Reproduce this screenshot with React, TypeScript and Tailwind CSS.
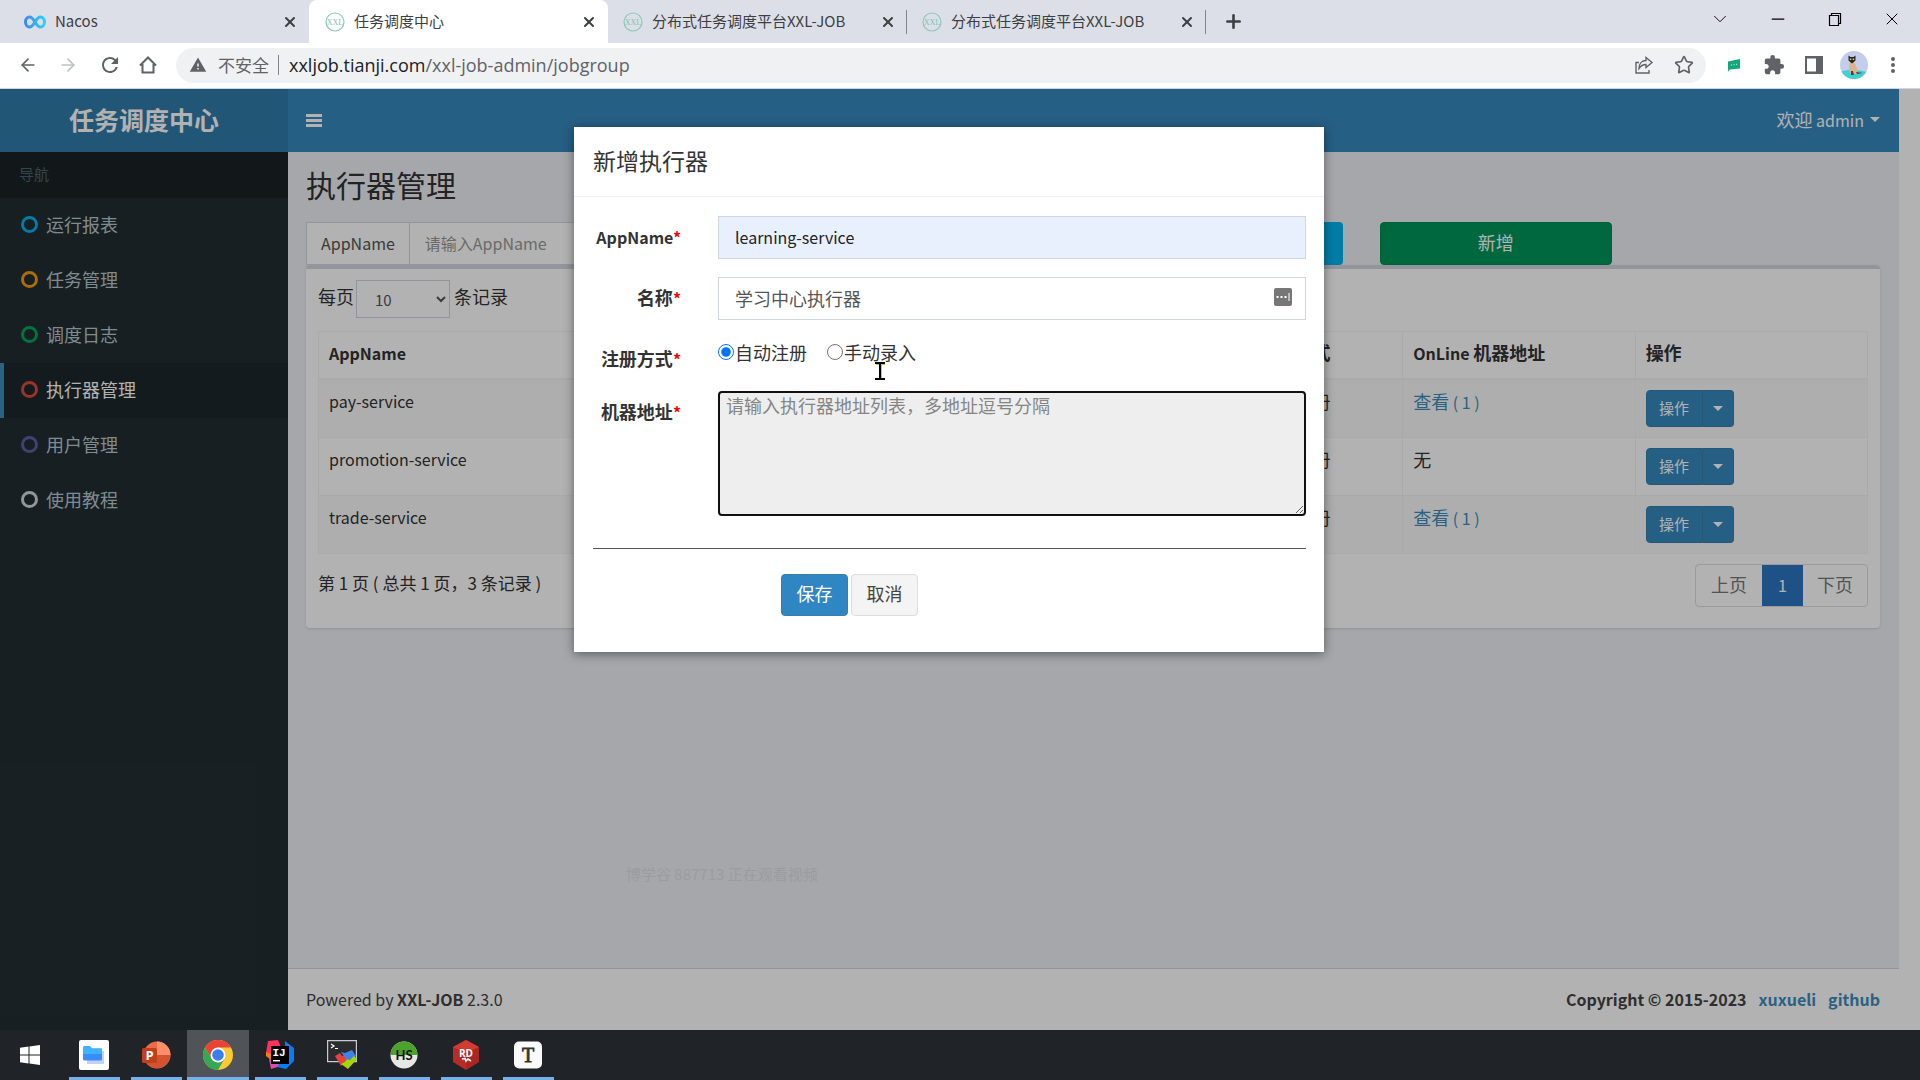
import React from 'react';
import { ArrowLeft, ArrowRight, ChevronDown, Minus, Plus, Star, X } from 'lucide-react';
import { MdExtension, MdRefresh, MdWarning } from 'react-icons/md';

interface Tab {
  title: string;
  icon: 'nacos' | 'xxl';
  className: string;
  divider?: boolean;
}

interface MenuItem {
  label: string;
  ring: string;
  active?: boolean;
}

interface Executor {
  appName: string;
  title: string;
  online: number;
}

const tabs: Tab[] = [
  { title: 'Nacos', icon: 'nacos', className: 'w-[309px] pl-6' },
  { title: '任务调度中心', icon: 'xxl', className: 'w-[299px] pl-4 rounded-t-lg bg-white' },
  { title: '分布式任务调度平台XXL-JOB', icon: 'xxl', className: 'w-[299px] pl-[15px]', divider: true },
  { title: '分布式任务调度平台XXL-JOB', icon: 'xxl', className: 'w-[299px] pl-[15px]', divider: true },
];

const menu: MenuItem[] = [
  { label: '运行报表', ring: 'border-[#00b4f0]' },
  { label: '任务管理', ring: 'border-[#f39c12]' },
  { label: '调度日志', ring: 'border-[#00a65a]' },
  { label: '执行器管理', ring: 'border-[#dd4b39]', active: true },
  { label: '用户管理', ring: 'border-[#605ca8]' },
  { label: '使用教程', ring: 'border-[#d2d6de]' },
];

const executors: Executor[] = [
  { appName: 'pay-service', title: '支付服务', online: 1 },
  { appName: 'promotion-service', title: '促销服务', online: 0 },
  { appName: 'trade-service', title: '交易服务', online: 1 },
];

const XxlIcon = () => (
  <svg viewBox="0 0 20 20" className="h-5 w-5">
    <circle cx="10" cy="10" r="9" fill="none" stroke="#8cc9b8" strokeWidth="1.2" />
    <text x="10" y="12.500" textAnchor="middle" fontSize="8" fill="#7cc4b0" fontFamily="Liberation Serif, serif">XXL</text>
  </svg>
);

const NacosIcon = () => (
  <svg viewBox="0 0 22 14" className="h-[14px] w-[22px]" fill="none" strokeWidth="3">
    <defs>
      <linearGradient id="nacos" x1="0" x2="1">
        <stop offset="0" stopColor="#3b8cf0" />
        <stop offset="1" stopColor="#2ed0f5" />
      </linearGradient>
    </defs>
    <path stroke="url(#nacos)" d="M11 7C9 3.500 7.500 2 5.500 2a4 5 0 0 0 0 10C7.500 12 9 10.500 11 7s3.500-5 5.500-5a4 5 0 0 1 0 10C14.500 12 13 10.500 11 7z" />
  </svg>
);

const Caret = () => (
  <svg viewBox="0 0 10 5" className="h-[5px] w-[10px]" fill="currentColor">
    <path d="M0 0h10L5 5z" />
  </svg>
);

const TabStrip = () => (
  <div className="flex h-[43px] shrink-0 items-stretch bg-[#dcdfe7] text-[15px] text-[#3c4043]">
    {tabs.map((tab, i) => (
      <div key={i} className={`relative flex items-center pr-[11px] ${tab.className}`}>
        {tab.icon === 'nacos' ? <NacosIcon /> : <XxlIcon />}
        <span className="ml-[9px] flex-1 truncate">{tab.title}</span>
        <button aria-label="关闭标签页">
          <X className="h-4 w-4" strokeWidth={3} />
        </button>
        {tab.divider && <span className="absolute top-[10px] right-0 h-6 w-px bg-[#80868b]" />}
      </div>
    ))}
    <button aria-label="新标签页" className="ml-[17px]">
      <Plus className="h-[21px] w-[21px]" strokeWidth={3} />
    </button>
    <div className="ml-auto flex items-center gap-[37px] pr-[18px] pb-[6px] text-black">
      <button aria-label="搜索标签页"><ChevronDown className="h-[22px] w-[22px]" strokeWidth={1} /></button>
      <button aria-label="最小化"><Minus className="h-5 w-5" strokeWidth={1.5} /></button>
      <button aria-label="还原">
        <svg viewBox="0 0 20 20" className="h-5 w-5" fill="none" stroke="currentColor" strokeWidth="1.2">
          <path d="M4.500 6.500h9v10h-9zM6.500 6.500v-2h9v10h-2" />
        </svg>
      </button>
      <button aria-label="关闭"><X className="h-5 w-5" strokeWidth={1.2} /></button>
    </div>
  </div>
);

const Avatar = () => (
  <svg viewBox="0 0 28 28" className="h-7 w-7">
    <defs>
      <clipPath id="avatar"><circle cx="14" cy="14" r="14" /></clipPath>
    </defs>
    <g clipPath="url(#avatar)">
      <path fill="#c3cdec" d="M0 0h28v28H0z" />
      <path fill="#3fcfd4" d="M0 21c8-3 18-2 28 0v7H0z" />
      <path fill="#d9b78c" d="M10 11c-1 4-2 9 1 12h6c1-4-1-9-3-12z" />
      <path fill="#5b3d33" d="M11 20h2l1 4h-3zM16 21l7 1-6 1z" />
      <path fill="#2c2320" d="M8.500 4.500l2 1.500h3l2-1.500v5l-3.500 3-3.500-3z" />
      <path fill="#e8c9a0" d="M9.800 7.500h1.500V9H9.800zM12.700 7.500h1.500V9h-1.500z" />
    </g>
  </svg>
);

const Toolbar = () => (
  <div className="flex h-[46px] shrink-0 items-center border-b border-[#cfd5e4] bg-white pr-6 pb-px pl-[18px] text-[#5f6368]">
    <div className="flex items-center gap-5">
      <button aria-label="后退"><ArrowLeft className="h-5 w-5" /></button>
      <button aria-label="前进"><ArrowRight className="h-5 w-5 text-[#bdc1c6]" /></button>
      <button aria-label="重新加载"><MdRefresh className="h-6 w-6" /></button>
      <button aria-label="主页" className="-ml-1">
        <svg viewBox="0 0 20 20" className="h-5 w-5" fill="none" stroke="currentColor" strokeWidth="2">
          <path d="M2 10.500L10 2.500l8 8M4.500 9v8.500h11V9" />
        </svg>
      </button>
    </div>
    <div className="ml-[18px] flex h-[35px] flex-1 items-center rounded-full bg-[#f0f1f3] pr-3 pl-[13px] text-[17px]">
      <MdWarning className="h-[18px] w-[18px]" />
      <span className="ml-[11px]">不安全</span>
      <span className="mx-[9px] h-5 w-px bg-[#80868b]" />
      <span className="ml-px font-['Open_Sans',sans-serif] text-[18px] whitespace-pre">
        <span className="text-[#202124]">xxljob.tianji.com</span>/xxl-job-admin/jobgroup
      </span>
      <button aria-label="分享" className="ml-auto">
        <svg viewBox="0 0 20 20" className="h-5 w-5" fill="none" stroke="currentColor" strokeWidth="1.4">
          <path d="M5 7.500H2V18h13v-3M12 2.500l6 5-6 5v-3c-3 0-5 1-7 4 0-5 3-8 7-8z" />
        </svg>
      </button>
      <button aria-label="收藏" className="ml-5"><Star className="h-5 w-5" /></button>
    </div>
    <svg viewBox="0 0 14 14" className="ml-[21px] h-[14px] w-[14px]">
      <path fill="#12a77c" d="M1 3.500l12-2.500v9.500L3 11.500 1 13.500z" />
      <path stroke="#d7f5ea" d="M4 7h1M6.500 6.700h1M9 6.300h1" />
    </svg>
    <MdExtension className="ml-[22px] h-[22px] w-[22px]" />
    <svg viewBox="0 0 18 18" className="ml-5 h-[18px] w-[18px]">
      <path fill="currentColor" fillRule="evenodd" d="M0 0h18v18H0zM2 2.500v13h9v-13z" />
    </svg>
    <span className="ml-[17px]"><Avatar /></span>
    <svg viewBox="0 0 6 18" className="ml-[22px] h-[18px] w-[6px]" fill="currentColor">
      <circle cx="3" cy="3" r="2" /><circle cx="3" cy="9" r="2" /><circle cx="3" cy="15" r="2" />
    </svg>
  </div>
);

const Sidebar = () => (
  <aside className="flex w-[288px] shrink-0 flex-col bg-[#222d32]">
    <a href="#home" className="flex h-[63px] items-center justify-center bg-[#317ba9] pb-[2px] text-[25px] font-bold text-white">
      任务调度中心
    </a>
    <div className="flex h-[46px] items-center bg-[#1a2226] px-[19px] pb-[2px] text-[15px] text-[#4b646f]">导航</div>
    <nav>
      {menu.map((item) => (
        <a
          key={item.label}
          href={`#${item.label}`}
          className={`flex h-[55px] items-center border-l-4 pb-[2px] pl-[17px] text-[18px] ${
            item.active ? 'border-[#3c8dbc] bg-[#1e282c] text-white' : 'border-transparent text-[#b8c7ce]'
          }`}
        >
          <span className={`mr-2 h-[17px] w-[17px] rounded-full border-[3px] ${item.ring}`} />
          {item.label}
        </a>
      ))}
    </nav>
  </aside>
);

const SearchRow = () => (
  <div className="grid grid-cols-12 gap-x-[37px]">
    <div className="col-span-3 flex h-[43px] border border-[#d2d6de] bg-white">
      <label htmlFor="q-app" className="flex items-center border-r border-[#d2d6de] px-[14px] pb-[2px] text-[16px] text-[#555]">
        AppName
      </label>
      <input id="q-app" placeholder="请输入AppName" className="min-w-0 flex-1 px-[15px] pb-[2px] text-[16px] placeholder:text-[#999]" />
    </div>
    <div className="col-span-3 flex h-[43px] border border-[#d2d6de] bg-white">
      <label htmlFor="q-title" className="flex items-center border-r border-[#d2d6de] px-[14px] pb-[2px] text-[18px] text-[#555]">
        名称
      </label>
      <input id="q-title" placeholder="请输入名称" className="min-w-0 flex-1 px-[15px] pb-[2px] text-[18px] placeholder:text-[#999]" />
    </div>
    <button className="col-span-2 h-[43px] rounded bg-[#00b4f0] pb-[2px] text-[18px] text-white">搜索</button>
    <button className="col-span-2 h-[43px] rounded border border-[#008d4c] bg-[#00955a] pb-[2px] text-[18px] text-white">新增</button>
  </div>
);

const ExecutorTable = () => (
  <table className="mt-[13px] w-full table-fixed border-collapse text-left text-[#333]">
    <thead>
      <tr className="h-[47px] border-b-2 border-[#f4f4f4] text-[18px]">
        <th className="w-[40%] border border-[#f4f4f4] px-[10px] pb-1 text-[16px]">AppName</th>
        <th className="w-[20%] border border-[#f4f4f4] px-[10px] pb-1">名称</th>
        <th className="w-[10%] border border-[#f4f4f4] px-[10px] pb-1">注册方式</th>
        <th className="w-[15%] border border-[#f4f4f4] px-[10px] pb-1"><span className="text-[16px]">OnLine </span>机器地址</th>
        <th className="w-[15%] border border-[#f4f4f4] px-[10px] pb-1">操作</th>
      </tr>
    </thead>
    <tbody>
      {executors.map((row) => (
        <tr key={row.appName} className="h-[58px] align-top text-[18px] leading-[25px] odd:bg-[#f9f9f9]">
          <td className="border border-[#f4f4f4] px-[10px] pt-[9px] text-[16px]">{row.appName}</td>
          <td className="border border-[#f4f4f4] px-[10px] pt-[9px]">{row.title}</td>
          <td className="border border-[#f4f4f4] px-[10px] pt-[9px]">自动注册</td>
          <td className="border border-[#f4f4f4] px-[10px] pt-[9px]">
            {row.online > 0 ? (
              <a href="#online" className="text-[#3c8dbc]">查看<span className="text-[16px]"> ( {row.online} )</span></a>
            ) : (
              '无'
            )}
          </td>
          <td className="border border-[#f4f4f4] p-[10px]">
            <div className="flex h-[37px] text-[15px] text-white">
              <button className="w-[57px] rounded-l border border-[#367fa9] bg-[#3789bd] pb-[2px]">操作</button>
              <button aria-label="更多操作" className="flex w-[31px] items-center justify-center rounded-r border border-l-0 border-[#367fa9] bg-[#3789bd]">
                <Caret />
              </button>
            </div>
          </td>
        </tr>
      ))}
    </tbody>
  </table>
);

const ContentBox = () => (
  <section className="rounded border-t-4 border-[#d2d6de] bg-white px-3 pt-[11px] pb-[21px] shadow-sm">
    <div className="flex items-start gap-[2px] text-[18px] leading-8 text-[#333]">
      <label htmlFor="page-size">每页</label>
      <select id="page-size" className="mr-[2px] h-[38px] w-[94px] border border-[#d2d6de] bg-white px-[14px] text-[15px] text-[#555]">
        <option>10</option>
        <option>25</option>
      </select>
      <span>条记录</span>
    </div>
    <ExecutorTable />
    <div className="mt-[10px] flex items-start justify-between">
      <p className="pt-[6px] text-[17px] leading-[25px] text-[#333]">第 1 页 ( 总共 1 页，3 条记录 )</p>
      <div className="flex h-[43px] overflow-hidden rounded border border-[#ddd] text-[18px] text-[#777]">
        <button className="w-[66px] pb-[2px]">上页</button>
        <button className="-my-px w-[41px] bg-[#2c74c0] text-[16px] text-white">1</button>
        <button className="w-[64px] pb-[2px]">下页</button>
      </div>
    </div>
  </section>
);

const FormRow = ({ label, id, children }: { label: string; id: string; children: React.ReactNode }) => (
  <div className="flex items-start">
    <label htmlFor={id} className="w-[88px] shrink-0 pt-2 text-right text-[18px] leading-[25px] font-bold text-[#333]">
      {label === 'AppName' ? <span className="text-[16px]">{label}</span> : label}
      <span className="text-[16px] text-[#f00]">*</span>
    </label>
    <div className="ml-[37px] min-w-0 flex-1">{children}</div>
  </div>
);

const AddDialog = () => (
  <div role="dialog" aria-labelledby="dialog-title" className="absolute top-[38px] left-[574px] w-[750px] bg-white text-[#333] shadow-[0_2px_10px_rgba(0,0,0,0.45)]">
    <h4 id="dialog-title" className="flex h-[70px] items-center border-b border-[#f0f0f0] px-[19px] pb-[2px] text-[23px]">新增执行器</h4>
    <form className="pt-[19px] pr-[18px] pb-[36px] pl-[19px]">
      <div className="flex flex-col gap-[18px]">
        <FormRow label="AppName" id="appname">
          <input id="appname" defaultValue="learning-service" className="block h-[43px] w-full border border-[#d2d6de] bg-[#e8f0fe] px-4 pb-[2px] text-[16px] text-[#222]" />
        </FormRow>
        <FormRow label="名称" id="title">
          <div className="flex h-[43px] items-center border border-[#d2d6de] pr-[13px]">
            <input id="title" defaultValue="学习中心执行器" className="h-full min-w-0 flex-1 px-4 pb-[2px] text-[18px] text-[#555]" />
            <svg viewBox="0 0 18 18" className="mb-1 h-[18px] w-[18px]">
              <rect width="18" height="18" rx="2" fill="#777" />
              <path stroke="#fff" strokeWidth="2" d="M2.500 9h2M6.500 9h2M10.500 9h2" />
              <path stroke="#fff" d="M15 5v8" />
            </svg>
          </div>
        </FormRow>
        <FormRow label="注册方式" id="auto">
          <div className="flex h-[35px] items-center gap-5 pb-[7px] text-[18px]">
            <label className="flex items-center gap-px">
              <input id="auto" type="radio" name="addressType" defaultChecked className="h-4 w-4" />自动注册
            </label>
            <label className="flex items-center gap-px">
              <input type="radio" name="addressType" className="h-4 w-4" />手动录入
            </label>
          </div>
        </FormRow>
        <FormRow label="机器地址" id="addresses">
          <textarea
            id="addresses"
            readOnly
            placeholder="请输入执行器地址列表，多地址逗号分隔"
            className="block h-[125px] w-full rounded border-2 border-[#101010] bg-[#eee] px-[6px] text-[18px] leading-[25px] placeholder:text-[#858585]"
          />
        </FormRow>
      </div>
      <hr className="mt-8 border-[#555]" />
      <div className="mt-[25px] flex gap-[3px] pl-[188px] text-[18px]">
        <button type="button" className="h-[42px] w-[67px] rounded border border-[#367fa9] bg-[#3085c3] pb-[3px] text-white">保存</button>
        <button type="button" className="h-[42px] w-[67px] rounded border border-[#ddd] bg-[#f4f4f4] pb-[3px] text-[#444]">取消</button>
      </div>
    </form>
  </div>
);

const apps = [
  {
    name: '文件',
    icon: (
      <svg viewBox="0 0 30 30" className="h-[30px] w-[30px]">
        <rect width="30" height="30" rx="2" fill="#fff" />
        <path fill="#b4c4fb" d="M8 11h17v13H8z" opacity=".8" />
        <path fill="#3a8df8" d="M4 8q0-1.500 1.500-1.500H11l2 2h8.500Q23 8.500 23 10v9q0 1.500-1.500 1.500h-16Q4 20.500 4 19z" />
        <path fill="#3fb2fa" d="M4 7.500Q4 6 5.500 6H11l2 2.500h10V14H4z" />
      </svg>
    ),
  },
  {
    name: 'PowerPoint',
    icon: (
      <svg viewBox="0 0 30 30" className="h-[30px] w-[30px]">
        <circle cx="16" cy="15" r="13.500" fill="#ed6c47" />
        <path fill="#ff8f6b" d="M16 1.500A13.500 13.500 0 0 1 29.500 15H16z" />
        <path fill="#d35230" d="M3 15h26.500A13.500 13.500 0 0 1 5 22.500z" />
        <rect x="1" y="8" width="15" height="15" rx="1.500" fill="#c43e1c" />
        <text x="8.500" y="20" textAnchor="middle" fontSize="13" fontWeight="bold" fill="#fff" fontFamily="Open Sans, sans-serif">P</text>
      </svg>
    ),
  },
  {
    name: 'Chrome',
    active: true,
    icon: (
      <svg viewBox="0 0 30 30" className="h-[30px] w-[30px]">
        <circle cx="15" cy="15" r="15" fill="#fcc934" />
        <path fill="#ea4335" d="M2 7.500A15 15 0 0 1 28 7.500H15L8.500 18.750z" />
        <path fill="#34a853" d="M2 7.500A15 15 0 0 0 15 30l6.500-11.250L15 22.500 8.500 18.750z" />
        <circle cx="15" cy="15" r="7.500" fill="#fff" />
        <circle cx="15" cy="15" r="5.800" fill="#3b7ded" />
      </svg>
    ),
  },
  {
    name: 'IntelliJ IDEA',
    icon: (
      <svg viewBox="0 0 30 30" className="h-[30px] w-[30px]">
        <path fill="#fe315d" d="M3 1l10-1 3 7-9 14-6-8z" />
        <path fill="#f97a12" d="M1 12l6 2-1 6-5-4z" />
        <path fill="#d94fa8" d="M4 19l6 2 6 5-10 3z" />
        <path fill="#087cfa" d="M20 1l9 7v13l-8 8-9-2 8-10z" />
        <path fill="#000" d="M6 6h18v18H6z" />
        <text x="7.500" y="16" fontSize="11" fontWeight="bold" fill="#fff" fontFamily="Liberation Mono, monospace">IJ</text>
        <path fill="#fff" d="M8 20h7v1.400H8z" />
      </svg>
    ),
  },
  {
    name: 'MobaXterm',
    icon: (
      <svg viewBox="0 0 30 30" className="h-[30px] w-[30px]">
        <path fill="#2a2c30" stroke="#c8cacd" strokeWidth="1.200" d="M.6.600h28.800v21H.6z" />
        <path fill="none" stroke="#fff" strokeWidth="1.200" d="M4 4l3 2-3 2M8 8.500h3" />
        <path fill="#e8413c" d="M8 16l5-3 2 3 3-1 2 5-6 6z" />
        <path fill="#3f83ea" d="M14 12l4 1 7-3 4 6-5 4-5-1z" />
        <path fill="#a6d608" d="M14 24l4-2 2-3 3 1 4-4 3 3-9 10z" />
      </svg>
    ),
  },
  {
    name: 'HeidiSQL',
    icon: (
      <svg viewBox="0 0 30 30" className="h-[30px] w-[30px]">
        <circle cx="15" cy="15" r="13.500" fill="#e6e8e6" />
        <path fill="#4ba32a" d="M1.500 15a13.500 13.500 0 0 1 27 0z" />
        <text x="15" y="19.500" textAnchor="middle" fontSize="13" fontWeight="bold" fill="#111" fontFamily="Lato, sans-serif">HS</text>
      </svg>
    ),
  },
  {
    name: 'Redis Desktop',
    icon: (
      <svg viewBox="0 0 30 30" className="h-[30px] w-[30px]">
        <path fill="#b92b27" d="M15 0l13 7v15l-13 8-13-8V7z" />
        <path fill="#d23a33" d="M15 0l13 7-13 6L2 7z" />
        <path fill="#9c211f" d="M15 13l13-6v15l-13 8z" opacity=".5" />
        <text x="15" y="17" textAnchor="middle" fontSize="10" fontWeight="bold" fill="#fff" fontFamily="Open Sans, sans-serif">RD</text>
        <path fill="none" stroke="#fff" strokeWidth="1.600" d="M11 19l3-.5 1 2.500 2-2 3 2" />
      </svg>
    ),
  },
  {
    name: 'Typora',
    icon: (
      <svg viewBox="0 0 30 30" className="h-[30px] w-[30px]">
        <rect x="1" y="1.500" width="28" height="27" rx="5" fill="#fafafa" />
        <text x="15" y="21.500" textAnchor="middle" fontSize="20" fill="#333" stroke="#333" strokeWidth=".8" fontFamily="Liberation Serif, serif">T</text>
      </svg>
    ),
  },
];

const Taskbar = () => (
  <footer className="flex h-[50px] shrink-0 bg-[#202328]">
    <button aria-label="开始" className="flex w-[60px] items-center justify-center">
      <svg viewBox="0 0 20 20" className="h-5 w-5" fill="#fff">
        <path d="M0 2.800l8.500-1.200v8H0zM9.500 1.400L20 0v9.600H9.500zM0 10.400h8.500v8L0 17.200zM9.500 10.400H20V20L9.500 18.600z" />
      </svg>
    </button>
    <div className="ml-[3px] flex">
      {apps.map((app) => (
        <button key={app.name} aria-label={app.name} className={`flex w-[62px] flex-col items-center ${app.active ? 'bg-[#505358]' : ''}`}>
          <span className="flex flex-1 items-center pt-[3px]">{app.icon}</span>
          <span className={`h-[3px] bg-[#76b0ea] ${app.active ? 'w-full' : 'w-[51px]'}`} />
        </button>
      ))}
    </div>
  </footer>
);

const App = () => (
  <div className="flex h-screen flex-col overflow-hidden font-['Noto_Sans_CJK_SC',sans-serif]">
    <TabStrip />
    <Toolbar />
    <div className="relative flex min-h-0 flex-1 bg-white pr-[21px]">
      <Sidebar />
      <div className="flex min-w-0 flex-1 flex-col bg-[#ecf0f5]">
        <header className="flex h-[63px] shrink-0 items-center justify-between bg-[#3789bd] pr-[19px] pl-[18px] text-white">
          <button aria-label="切换菜单" className="flex flex-col gap-[2px]">
            <span className="h-[3px] w-4 bg-white" />
            <span className="h-[3px] w-4 bg-white" />
            <span className="h-[3px] w-4 bg-white" />
          </button>
          <button className="flex items-center pb-[2px] text-[18px]">
            欢迎<span className="mr-[6px] text-[16px] whitespace-pre"> admin</span>
            <Caret />
          </button>
        </header>
        <main className="flex-1 pr-[19px] pl-[18px]">
          <h1 className="pt-3 pb-[18px] text-[30px] leading-10 text-[#333]">执行器管理</h1>
          <SearchRow />
          <ContentBox />
        </main>
        <div className="flex h-[62px] shrink-0 items-center justify-between border-t border-[#d2d6de] bg-white pr-[19px] pb-[2px] pl-[18px] text-[16px] text-[#444]">
          <span>Powered by <b>XXL-JOB</b> 2.3.0</span>
          <span className="flex gap-3 font-bold">
            Copyright © 2015-2023
            <a href="#xuxueli" className="text-[#3c8dbc]">xuxueli</a>
            <a href="#github" className="text-[#3c8dbc]">github</a>
          </span>
        </div>
      </div>
      <div className="absolute inset-0 bg-black/30" />
      <AddDialog />
      <span className="absolute top-[776px] left-[626px] text-[15px] leading-[18px] text-[#9b9ca0]">博学谷 887713 正在观看视频</span>
      <svg viewBox="0 0 10 18" className="absolute top-[273px] left-[875px] h-[18px] w-[10px]" fill="none">
        <path stroke="#c9c84a" strokeWidth="1" d="M6.500 2v14M1 2.500h9" />
        <path stroke="#000" strokeWidth="2" d="M0 1h10M0 17h10M5 1v16" />
      </svg>
    </div>
    <Taskbar />
  </div>
);

export default App;
